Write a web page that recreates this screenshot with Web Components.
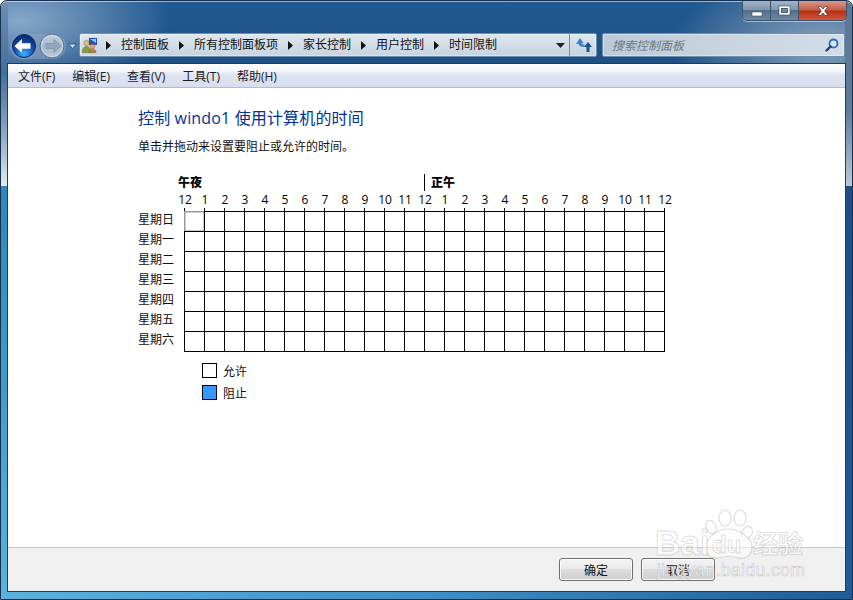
<!DOCTYPE html>
<html>
<head>
<meta charset="utf-8">
<style>
html,body{margin:0;padding:0;width:853px;height:600px;overflow:hidden;background:#fff;}
body{font-family:"Open Sans","Noto Sans CJK SC",sans-serif;font-size:12px;color:#000;}
</style>
</head>
<body>
<win-frame>
  <caption-buttons slot="caption"></caption-buttons>
  <nav-bar slot="nav"></nav-bar>
  <menu-bar slot="menu"></menu-bar>
  <time-page></time-page>
  <dlg-footer slot="footer">
    <dlg-button>确定</dlg-button>
    <dlg-button>取消</dlg-button>
  </dlg-footer>
</win-frame>
<baidu-mark></baidu-mark>

<script>
const FONT = '"Open Sans","Noto Sans CJK SC",sans-serif';

class WinFrame extends HTMLElement {
  constructor() {
    super();
    this.attachShadow({ mode: 'open' });
    this.shadowRoot.innerHTML = `
<style>
:host{display:flex;flex-direction:column;box-sizing:border-box;width:853px;height:600px;padding:0 7px 7px 7px;
  border:1px solid #17304d;border-radius:7px 7px 0 0;box-shadow:inset 0 1px 0 rgba(255,255,255,.55);
  background:
    linear-gradient(to bottom,#6f90b0 0,#3f6f9e 70px,#86a6c0 130px,#e2eaf0 185px) 0 0/7px 185px no-repeat,
    linear-gradient(to bottom,#5a7896 0,#5f7d9b 110px,#bdcad5 185px) 100% 0/7px 185px no-repeat,
    linear-gradient(to bottom,#2d86bc,#5ab2de) 0 185px/7px 415px no-repeat,
    linear-gradient(#1d4f86,#1f5c98) 100% 185px/7px 415px no-repeat,
    linear-gradient(to right,#5ab2de,#3f8fc8 50%,#1f5c98) 0 100%/100% 7px no-repeat,
    radial-gradient(ellipse 150px 70px at 20px 20px,rgba(170,195,220,.75),rgba(170,195,220,0)),
    radial-gradient(ellipse 150px 70px at 820px 45px,rgba(175,190,205,.75),rgba(175,190,205,0)),
    linear-gradient(to bottom,#235a92 0,#1d5084 64px);
}
.head{height:62px;display:flex;flex-direction:column;flex:none;margin-right:-1px;}
.content{flex:1;display:flex;flex-direction:column;border:1px solid #1d3d5c;background:#fff;min-height:0;margin-left:-1px;margin-right:-1px;}
.main{flex:1;min-height:0;}
</style>
<div class="head"><slot name="caption"></slot><slot name="nav"></slot></div>
<div class="content">
  <slot name="menu"></slot>
  <div class="main"><slot></slot></div>
  <slot name="footer"></slot>
</div>`;
  }
}
customElements.define('win-frame', WinFrame);

class CaptionButtons extends HTMLElement {
  constructor() {
    super();
    this.attachShadow({ mode: 'open' });
    this.shadowRoot.innerHTML = `
<style>
:host{display:flex;justify-content:flex-end;height:32px;flex:none;}
.box{display:flex;height:20px;box-sizing:border-box;border:1px solid #3c5068;border-top:none;border-radius:0 0 5px 5px;overflow:hidden;margin-right:-1px;box-shadow:0 1px 0 rgba(255,255,255,.5);}
.b{display:flex;align-items:center;justify-content:center;height:19px;box-sizing:border-box;}
.min,.max{width:28px;background:linear-gradient(to bottom,#a3b5c8 0,#8097ae 45%,#556f8c 50%,#6d88a2 100%);border-right:1px solid #3c5068;}
.close{width:47px;background:linear-gradient(to bottom,#d9998c 0,#c4604a 45%,#b83016 55%,#cf5a3e 100%);}
</style>
<div class="box">
  <div class="b min"><svg width="12" height="12" viewBox="0 0 12 12"><rect x="1" y="7" width="10" height="4" fill="#fff" stroke="#3c5068" stroke-width=".6"/></svg></div>
  <div class="b max"><svg width="13" height="12" viewBox="0 0 13 12"><rect x="1" y="1" width="11" height="9" fill="#fff" stroke="#35495f" stroke-width=".6"/><rect x="3.500" y="3.500" width="6" height="4" fill="#6d88a2" stroke="#35495f" stroke-width=".8"/></svg></div>
  <div class="b close"><svg width="16" height="12" viewBox="0 0 16 12"><path d="M3 1.500h3l2 2.500 2-2.500h3L9.700 6 13 10.500h-3L8 8l-2 2.500H3L6.300 6z" fill="#fff" stroke="#5c2a22" stroke-width=".7"/></svg></div>
</div>`;
  }
}
customElements.define('caption-buttons', CaptionButtons);

class NavBar extends HTMLElement {
  constructor() {
    super();
    this.attachShadow({ mode: 'open' });
    const crumbs = ['控制面板', '所有控制面板项', '家长控制', '用户控制', '时间限制'];
    const arrow = '<svg class="sep" width="5" height="9" viewBox="0 0 5 9"><path d="M0 0l5 4.500L0 9z" fill="#111"/></svg>';
    this.shadowRoot.innerHTML = `
<style>
:host{display:flex;align-items:center;height:24px;flex:none;font:12px ${FONT};}
.orbs{width:71px;height:30px;margin:1px 0 -1px 0;flex:none;display:block;}
.addr{display:flex;align-items:center;width:518px;height:24px;box-sizing:border-box;flex:none;border:1px solid #6f8fae;border-radius:2px;
  background:linear-gradient(to bottom,#dfe7ef,#c6d3df);box-shadow:inset 0 0 0 1px rgba(255,255,255,.35);}
.path{display:flex;align-items:center;flex:1;color:#111;white-space:nowrap;line-height:20px;}
.path svg.ic{margin:0 -2px 0 2px;flex:none;}
.path svg.sep{margin:0 10px 0 10px;flex:none;}
.drop{width:18px;display:flex;justify-content:center;flex:none;}
.refresh{width:26px;height:22px;display:flex;align-items:center;justify-content:center;border-left:1px solid #6f8fae;flex:none;}
.search{display:flex;align-items:center;justify-content:space-between;width:243px;height:24px;box-sizing:border-box;margin-left:5px;flex:none;padding:0 5px 0 9px;
  border:1px solid #6f8fae;border-radius:2px;background:linear-gradient(to right,#bccbd9,#d4dde6);color:#6c7680;font-style:italic;box-shadow:inset 0 0 0 1px rgba(255,255,255,.35);}
</style>
<svg class="orbs" width="71" height="30" viewBox="0 0 71 30">
  <defs>
    <radialGradient id="bk" cx=".5" cy=".85" r=".85"><stop offset="0" stop-color="#45b0f5"/><stop offset=".5" stop-color="#0f50b4"/><stop offset="1" stop-color="#06266a"/></radialGradient>
    <linearGradient id="fw" x1="0" y1="0" x2="0" y2="1"><stop offset="0" stop-color="#c3d0dd"/><stop offset=".5" stop-color="#a6b9cc"/><stop offset="1" stop-color="#b8c9da"/></linearGradient>
  </defs>
  <rect x="2" y="3" width="56" height="25" rx="12.500" fill="#8ba6c2" opacity=".55"/>
  <circle cx="16" cy="15" r="13.500" fill="#7e9cbc" opacity=".6"/>
  <circle cx="16" cy="15" r="11.500" fill="url(#bk)" stroke="#0b2a5c"/>
  <path d="M6.500 15l7.500-7v4.200h8.500v5.600H14v4.200z" fill="#fff"/>
  <circle cx="44" cy="15" r="12" fill="url(#fw)" stroke="#56718f"/>
  <circle cx="44" cy="15" r="10.500" fill="none" stroke="#d3dde7" stroke-width=".8"/>
  <path d="M53 15l-7-6.500v4h-8v5h8v4z" fill="#93a7ba" stroke="#7c92a8" stroke-width=".7"/>
  <path d="M60.500 13h8L64.500 17.500z" fill="#cfe6f8" stroke="#1d5a94"/>
</svg>
<div class="addr">
  <div class="path">
    <svg class="ic" width="16" height="16" viewBox="0 0 16 16">
      <rect x="6.500" y=".5" width="9" height="8" fill="#2450b8" stroke="#dfe7f2" stroke-width=".8"/><path d="M8 2h6v4z" fill="#9cc2f2"/>
      <circle cx="4.500" cy="6" r="2.600" fill="#dcc27a" stroke="#7f6a2a" stroke-width=".5"/>
      <path d="M.5 14c0-6 8-6 8 0v1.500h-8z" fill="#7fa23c" stroke="#4f6a22" stroke-width=".5"/>
      <circle cx="10.500" cy="9.500" r="2.300" fill="#e0a868" stroke="#8a5a2a" stroke-width=".5"/>
      <path d="M7 15.500c0-4.500 7-4.500 7 0z" fill="#c47a3c" stroke="#7a4a20" stroke-width=".5"/>
    </svg>
    ${crumbs.map(c => arrow + '<span>' + c + '</span>').join('')}
  </div>
  <div class="drop"><svg width="9" height="5" viewBox="0 0 9 5"><path d="M0 0h9L4.500 5z" fill="#1a2530"/></svg></div>
  <div class="refresh"><svg width="17" height="16" viewBox="0 0 17 16"><path d="M5 1L1 7h2.500c.5 2 2.500 3 6 3V7.500C7.500 7.500 6.500 7 6.500 6.500L8.500 6z" fill="#3a80d0"/><path d="M13 5l-4 5h2.500v5h3v-5H17z" fill="#1b4f96"/></svg></div>
</div>
<div class="search"><span>搜索控制面板</span>
  <svg width="14" height="14" viewBox="0 0 14 14"><circle cx="8.500" cy="5.500" r="4" fill="#dbe8f5" stroke="#2a6cb8" stroke-width="1.800"/><path d="M5.500 8.500L1.500 12.500" stroke="#1c3f78" stroke-width="2.400" stroke-linecap="round"/></svg>
</div>`;
  }
}
customElements.define('nav-bar', NavBar);

class MenuBar extends HTMLElement {
  constructor() {
    super();
    this.attachShadow({ mode: 'open' });
    const items = ['文件(F)', '编辑(E)', '查看(V)', '工具(T)', '帮助(H)'];
    this.shadowRoot.innerHTML = `
<style>
:host{display:flex;align-items:center;gap:17px;height:24px;flex:none;box-sizing:border-box;padding:1px 0 0 10px;
  font:12px ${FONT};color:#1a1a2a;white-space:nowrap;
  background:linear-gradient(to bottom,#fff 0,#f4f6fb 30%,#dfe4f1 45%,#d8deee 100%);border-bottom:1px solid #b4bccd;}
</style>
${items.map(i => '<span>' + i + '</span>').join('')}`;
  }
}
customElements.define('menu-bar', MenuBar);

class TimeGrid extends HTMLElement {
  constructor() {
    super();
    this.attachShadow({ mode: 'open' });
    const hours = [12, 1, 2, 3, 4, 5, 6, 7, 8, 9, 10, 11, 12, 1, 2, 3, 4, 5, 6, 7, 8, 9, 10, 11, 12];
    const days = ['星期日', '星期一', '星期二', '星期三', '星期四', '星期五', '星期六'];
    let cells = '';
    for (let r = 0; r < 7; r++) {
      for (let c = 0; c < 24; c++) {
        cells += '<i class="' + (r === 0 && c === 0 ? 'cur' : '') + '"></i>';
      }
    }
    this.shadowRoot.innerHTML = `
<style>
:host{display:block;font:12px ${FONT};color:#000;}
.marks{display:flex;height:17px;margin-left:40px;font-weight:700;line-height:18px;}
.marks b:first-child{width:246px;}
.marks b:last-child{border-left:1px solid #000;padding-left:6px;}
.hours{display:flex;height:17px;margin-left:37px;line-height:18px;}
.hours span{width:20px;flex:none;text-align:center;}
.ticks{display:flex;height:3px;margin-left:46px;width:481px;box-sizing:border-box;border-right:1px solid #000;}
.ticks i{width:20px;flex:none;box-sizing:border-box;border-left:1px solid #000;}
.body{display:flex;}
.days{width:46px;flex:none;margin-top:-1px;}
.days div{height:20px;line-height:20px;white-space:nowrap;color:#111;}
.cells{display:grid;grid-template-columns:repeat(24,20px);grid-auto-rows:20px;border-right:1px solid #000;border-bottom:1px solid #000;}
.cells i{box-sizing:border-box;border-left:1px solid #000;border-top:1px solid #000;position:relative;}
.cells i.cur::after{content:"";position:absolute;left:-1px;top:-1px;width:21px;height:21px;box-sizing:border-box;border:1px solid #999;box-shadow:inset 0 0 0 .5px #999;}
</style>
<div class="marks"><b>午夜</b><b>正午</b></div>
<div class="hours">${hours.map(h => '<span>' + h + '</span>').join('')}</div>
<div class="ticks">${'<i></i>'.repeat(24)}</div>
<div class="body">
  <div class="days">${days.map(d => '<div>' + d + '</div>').join('')}</div>
  <div class="cells">${cells}</div>
</div>`;
  }
}
customElements.define('time-grid', TimeGrid);

class LegendItem extends HTMLElement {
  constructor() {
    super();
    this.attachShadow({ mode: 'open' });
    const fill = this.getAttribute('fill') || '#fff';
    this.shadowRoot.innerHTML = `
<style>
:host{display:flex;align-items:center;gap:6px;height:15px;font:12px ${FONT};color:#111;}
.sw{width:15px;height:15px;box-sizing:border-box;border:1px solid #000;background:${fill};}
</style>
<div class="sw"></div><slot></slot>`;
  }
}
customElements.define('legend-item', LegendItem);

class TimePage extends HTMLElement {
  constructor() {
    super();
    this.attachShadow({ mode: 'open' });
    this.shadowRoot.innerHTML = `
<style>
:host{display:block;box-sizing:border-box;height:100%;padding:20px 0 0 130px;font:12px ${FONT};}
h1{margin:0;font-size:16px;font-weight:400;line-height:20px;color:#003399;white-space:nowrap;letter-spacing:.15px;}
p{margin:10px 0 18px;line-height:18px;color:#111;}
.legend{display:flex;flex-direction:column;gap:7px;margin:11px 0 0 64px;}
</style>
<h1>控制 windo1 使用计算机的时间</h1>
<p>单击并拖动来设置要阻止或允许的时间。</p>
<time-grid></time-grid>
<div class="legend">
  <legend-item fill="#fff">允许</legend-item>
  <legend-item fill="#3399ff">阻止</legend-item>
</div>`;
  }
}
customElements.define('time-page', TimePage);

class DlgFooter extends HTMLElement {
  constructor() {
    super();
    this.attachShadow({ mode: 'open' });
    this.shadowRoot.innerHTML = `
<style>
:host{display:flex;justify-content:flex-end;align-items:flex-start;gap:8px;height:44px;flex:none;box-sizing:border-box;
  padding:10px 130px 0 0;background:#f0f0f0;border-top:1px solid #c8c8c8;}
</style>
<slot></slot>`;
  }
}
customElements.define('dlg-footer', DlgFooter);

class DlgButton extends HTMLElement {
  constructor() {
    super();
    this.attachShadow({ mode: 'open' });
    this.shadowRoot.innerHTML = `
<style>
:host{display:flex;align-items:center;justify-content:center;width:74px;height:23px;box-sizing:border-box;font:12px ${FONT};color:#111;
  border:1px solid #707070;border-radius:3px;box-shadow:inset 0 0 0 1px #fbfbfb;
  background:linear-gradient(to bottom,#f3f3f3 0,#ebebeb 48%,#dddddd 50%,#cfcfcf 100%);}
</style>
<slot></slot>`;
  }
}
customElements.define('dlg-button', DlgButton);

class BaiduMark extends HTMLElement {
  constructor() {
    super();
    this.attachShadow({ mode: 'open' });
    this.shadowRoot.innerHTML = `
<style>
:host{position:absolute;left:650px;top:505px;width:165px;height:78px;display:block;pointer-events:none;}
svg{position:absolute;left:0;top:0;}
span{position:absolute;white-space:nowrap;color:rgba(255,255,255,.6);-webkit-text-stroke:1px rgba(170,170,170,.4);}
.bai{left:5px;top:18px;font:700 35px "Liberation Sans",sans-serif;}
.du{left:62px;top:26px;font:700 24px "Liberation Sans",sans-serif;}
.jy{left:103px;top:19px;font:700 25px "Noto Sans CJK SC",sans-serif;}
.url{left:7px;top:55px;font:17.500px "Liberation Sans",sans-serif;letter-spacing:.42px;color:rgba(255,255,255,.85);-webkit-text-stroke:.7px rgba(160,160,160,.5);}
</style>
<svg width="165" height="60" viewBox="0 0 165 60">
  <g fill="rgba(255,255,255,.5)" stroke="rgba(170,170,170,.4)" stroke-width="1.200">
    <ellipse cx="61" cy="22" rx="5" ry="7" transform="rotate(-25 61 22)"/>
    <ellipse cx="75" cy="13" rx="6" ry="8"/>
    <ellipse cx="90" cy="13" rx="6" ry="8"/>
    <ellipse cx="97" cy="28" rx="5" ry="7" transform="rotate(25 97 28)"/>
    <path d="M56 42c0-10 12-18 22-18s24 8 24 18c0 9-7 12-13 11-7-2-14-2-21 0-7 1-12-2-12-11z"/>
  </g>
</svg>
<span class="bai">Bai</span>
<span class="du">du</span>
<span class="jy">经验</span>
<span class="url">jingyan.baidu.com</span>`;
  }
}
customElements.define('baidu-mark', BaiduMark);
</script>
</body>
</html>
